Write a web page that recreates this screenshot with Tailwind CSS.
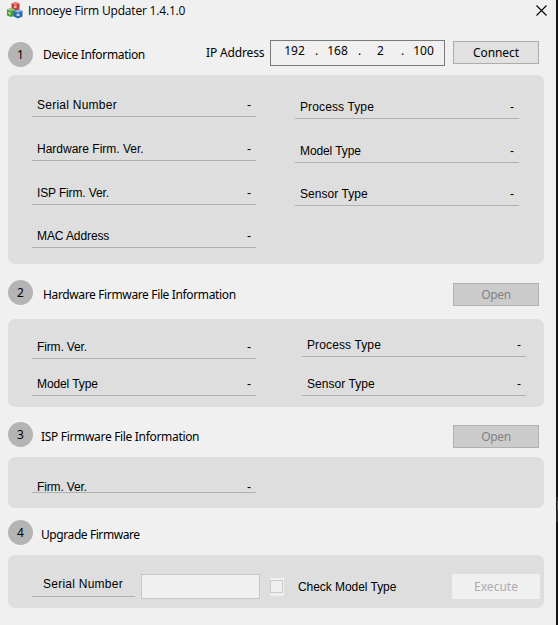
<!DOCTYPE html>
<html lang="en">
<head>
<meta charset="utf-8">
<title>Innoeye Firm Updater 1.4.1.0</title>
<script src="https://cdn.jsdelivr.net/npm/@tailwindcss/browser@4"></script>
</head>
<body class="w-[558px] h-[625px] overflow-hidden bg-[#f0f0f0] font-['Liberation_Sans',sans-serif] text-[12px] text-black whitespace-nowrap">
<div class="flex w-[558px] h-[625px]">
<main class="w-[556px] h-[625px] pl-2 pr-3 flex flex-col">
  <header class="h-[40px] flex items-start justify-between">
    <div class="flex">
      <svg class="w-[16px] h-[17px] mt-[2px] -ml-[1px]" viewBox="0 0 16 17">
        <path d="M4.500 1.500 8.500 0l4 1.500v6L8.500 9l-4-1.500z" fill="#c93a38"/><path d="m4.500 1.500 4-1.500 4 1.500-4 1.500z" fill="#ec8078"/><path d="M7 3.500h2.500v2.500H7z" fill="#f4b5ad"/>
        <path d="M0 7.500 4 6l4 1.500v6L4 15l-4-1.500z" fill="#4d9b37"/><path d="M0 7.500 4 6l4 1.500L4 9z" fill="#9dce82"/><path d="M1.500 9.500 3.500 10.500v2.500L1.500 12z" fill="#c8e3b9"/>
        <path d="m6.500 9 4.500-1.500L15.500 9v5.500L11 16.500l-4.500-2z" fill="#2d69ad"/><path d="m6.500 9 4.500-1.500L15.500 9 11 10.700z" fill="#83b4e4"/><path d="M9.500 11.700h3v2.300h-3z" fill="#b4d2ee"/>
      </svg>
      <h1 class="ml-[5px] mt-[1px] font-['Open_Sans',sans-serif] text-[12px] leading-[20px] tracking-[-0.18px]">Innoeye Firm Updater 1.4.1.0</h1>
    </div>
    <svg class="w-[11px] h-[11px] mt-[5px] -mr-[3px]" viewBox="0 0 11 11" fill="none" stroke="#000" stroke-width="1.100"><path d="M.5.500l10 10M10.500.500l-10 10"/></svg>
  </header>

  <section class="h-[35px] flex items-start font-['Noto_Sans',sans-serif]">
    <span class="mt-[2px] size-[25px] rounded-full bg-[#b4b4b4] text-center leading-[25px]">1</span>
    <h2 class="ml-[10px] mt-[5px] w-[163px] leading-[20px] tracking-[-0.34px]">Device Information</h2>
    <span class="mt-[3px] w-[64px] leading-[20px] tracking-[-0.15px]">IP Address</span>
    <div class="w-[175px] h-[26px] border border-[#7a7a7a] flex leading-[20px] text-center">
      <span class="ml-[13px] w-[21px]">192</span><span class="w-[22px] pl-[1px]">.</span><span class="w-[21px]">168</span><span class="w-[22px] pl-[1px]">.</span><span class="w-[21px]">2</span><span class="w-[22px] pl-[1px]">.</span><span class="w-[21px]">100</span>
    </div>
    <button class="ml-[8px] mt-[1px] w-[86px] h-[23px] border border-[#adadad] bg-[#e1e1e1] leading-[21px] tracking-[-0.1px]">Connect</button>
  </section>
  <section class="h-[189px] rounded-[7px] bg-[#dedede] flex pl-6 gap-[39px]">
    <div class="w-[224px]">
      <div class="mt-[20px] h-[22px] border-b border-[#b0b0b0] px-[5px] flex justify-between leading-[20px]"><span class="tracking-[0.25px]">Serial Number</span><span>-</span></div>
      <div class="mt-[22px] h-[22px] border-b border-[#b0b0b0] px-[5px] flex justify-between leading-[20px]"><span>Hardware Firm. Ver.</span><span>-</span></div>
      <div class="mt-[22px] h-[22px] border-b border-[#b0b0b0] px-[5px] flex justify-between leading-[20px]"><span class="tracking-[-0.14px]">ISP Firm. Ver.</span><span>-</span></div>
      <div class="mt-[21px] h-[22px] border-b border-[#b0b0b0] px-[5px] flex justify-between leading-[20px]"><span class="tracking-[-0.1px]">MAC Address</span><span>-</span></div>
    </div>
    <div class="w-[224px]">
      <div class="mt-[22px] h-[22px] border-b border-[#b0b0b0] px-[5px] flex justify-between leading-[20px]"><span class="tracking-[0.12px]">Process Type</span><span>-</span></div>
      <div class="mt-[22px] h-[22px] border-b border-[#b0b0b0] px-[5px] flex justify-between leading-[20px]"><span class="tracking-[-0.1px]">Model Type</span><span>-</span></div>
      <div class="mt-[21px] h-[22px] border-b border-[#b0b0b0] px-[5px] flex justify-between leading-[20px]"><span class="tracking-[0.06px]">Sensor Type</span><span>-</span></div>
    </div>
  </section>

  <section class="h-[55px] flex items-start font-['Noto_Sans',sans-serif]">
    <span class="mt-[16px] size-[25px] rounded-full bg-[#b4b4b4] text-center leading-[25px]">2</span>
    <h2 class="ml-[10px] mt-[21px] w-[410px] leading-[20px] tracking-[-0.36px]">Hardware Firmware File Information</h2>
    <button class="mt-[19px] w-[86px] h-[23px] border border-[#b0b0b0] bg-[#cccccc] text-[#838383] leading-[21px] tracking-[-0.3px]">Open</button>
  </section>
  <section class="h-[88px] rounded-[7px] bg-[#dedede] flex pl-6 gap-[46px]">
    <div class="w-[224px]">
      <div class="mt-[18px] h-[22px] border-b border-[#b0b0b0] px-[5px] flex justify-between leading-[20px]"><span class="tracking-[-0.15px]">Firm. Ver.</span><span>-</span></div>
      <div class="mt-[15px] h-[22px] border-b border-[#b0b0b0] px-[5px] flex justify-between leading-[20px]"><span class="tracking-[-0.1px]">Model Type</span><span>-</span></div>
    </div>
    <div class="w-[224px]">
      <div class="mt-[16px] h-[22px] border-b border-[#b0b0b0] px-[5px] flex justify-between leading-[20px]"><span class="tracking-[0.12px]">Process Type</span><span>-</span></div>
      <div class="mt-[17px] h-[22px] border-b border-[#b0b0b0] px-[5px] flex justify-between leading-[20px]"><span class="tracking-[0.06px]">Sensor Type</span><span>-</span></div>
    </div>
  </section>

  <section class="h-[50px] flex items-start font-['Noto_Sans',sans-serif]">
    <span class="mt-[15px] size-[25px] rounded-full bg-[#b4b4b4] text-center leading-[25px]">3</span>
    <h2 class="ml-[8px] mt-[20px] w-[412px] leading-[20px] tracking-[-0.32px]">ISP Firmware File Information</h2>
    <button class="mt-[18px] w-[86px] h-[23px] border border-[#b0b0b0] bg-[#cccccc] text-[#838383] leading-[21px] tracking-[-0.3px]">Open</button>
  </section>
  <section class="h-[51px] rounded-[7px] bg-[#dedede] pl-6 pt-[20px]">
    <div class="w-[224px] h-[16px] border-b border-[#b0b0b0] px-[5px] flex justify-between leading-[20px]"><span class="tracking-[-0.15px]">Firm. Ver.</span><span>-</span></div>
  </section>

  <section class="h-[47px] flex items-start font-['Noto_Sans',sans-serif]">
    <span class="mt-[12px] size-[25px] rounded-full bg-[#b4b4b4] text-center leading-[25px]">4</span>
    <h2 class="ml-[8px] mt-[17px] leading-[20px] tracking-[-0.42px]">Upgrade Firmware</h2>
  </section>
  <section class="h-[53px] rounded-[7px] bg-[#dedede] pl-6 flex items-start">
    <div class="mt-[19px] w-[103px] h-[23px] border-b border-[#b0b0b0] pl-[11px] leading-[20px] tracking-[0.25px]">Serial Number</div>
    <div class="ml-[6px] mt-[19px] w-[119px] h-[25px] border border-[#c8c8c8] bg-[#f0f0f0]"></div>
    <div class="ml-[10px] mt-[23px] w-[14px] h-[18px] py-[2px] bg-[#f0f0f0]"><div class="w-[13px] h-[13px] border border-[#cccccc]"></div></div>
    <span class="ml-[14px] mt-[22px] w-[154px] leading-[20px] tracking-[-0.05px]">Check Model Type</span>
    <button class="mt-[19px] w-[88px] h-[25px] bg-[#f0f0f0] text-[#acacac] font-['Noto_Sans',sans-serif] leading-[25px]">Execute</button>
  </section>
</main>
<div class="w-[2px] h-[625px] bg-[#151515] pt-[497px]"><div class="h-[4px] bg-[#2b2b2b]"></div><div class="ml-[1px] h-[9px] bg-[#5a5a5a]"></div><div class="h-[12px] bg-[#2b2b2b]"></div></div>
</div>
</body>
</html>
